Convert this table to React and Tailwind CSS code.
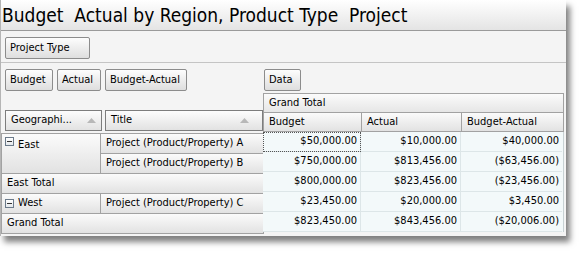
const font = { fontFamily: 'Tahoma, "DejaVu Sans Condensed", "DejaVu Sans", sans-serif' };

function Btn({ children, className = '' }) {
  return (
    <div
      className={`h-[22px] flex items-center px-[4px] border border-[#8c8c8c] rounded-[2px] bg-gradient-to-b from-[#fdfdfd] to-[#dedede] text-[11px] text-black ${className}`}
    >
      {children}
    </div>
  );
}

function SortArrow() {
  return (
    <svg width="9" height="5" viewBox="0 0 9 5" className="shrink-0">
      <path d="M0 5 L4.5 0 L9 5 Z" fill="#b8b8b8" />
    </svg>
  );
}

function Minus() {
  return (
    <span className="w-[9px] h-[9px] border border-[#6b7a8a] bg-gradient-to-b from-white to-[#e4e8ec] flex items-center justify-center mr-[4px] shrink-0">
      <span className="w-[5px] h-px bg-[#333]" />
    </span>
  );
}

function HeadCell({ children, className = '' }) {
  return (
    <div
      className={`flex items-center px-[5px] border-b border-r border-[#a2a2a2] bg-gradient-to-b from-[#fbfbfb] to-[#e2e2e2] text-[11px] text-black ${className}`}
    >
      {children}
    </div>
  );
}

const rows = [
  ['$50,000.00', '$10,000.00', '$40,000.00'],
  ['$750,000.00', '$813,456.00', '($63,456.00)'],
  ['$800,000.00', '$823,456.00', '($23,456.00)'],
  ['$23,450.00', '$20,000.00', '$3,450.00'],
  ['$823,450.00', '$843,456.00', '($20,006.00)'],
];

export default function App() {
  return (
    <div className="w-[584px] h-[255px] bg-white" style={font}>
      <div className="w-[566px] h-[236px] bg-[#f4f4f4] border-l border-[#b5b5b5] shadow-[4px_6px_6px_rgba(0,0,0,0.5)] flex flex-col">
        <div className="h-[31px] shrink-0 border-b border-[#9a9a9a] bg-gradient-to-b from-white to-[#e4e4e4] flex items-center pl-[1px] text-[19px] text-black leading-none">
          Budget&nbsp; Actual by Region, Product Type&nbsp; Project
        </div>

        <div className="h-[32px] shrink-0 border-b border-[#c4c4c4] pl-[4px] pt-[6px]">
          <Btn className="w-[85px]">Project Type</Btn>
        </div>

        <div className="flex flex-1">
          <div className="w-[262px] flex flex-col">
            <div className="flex gap-[4px] pl-[4px] pt-[6px] h-[47px]">
              <Btn className="w-[48px]">Budget</Btn>
              <Btn className="w-[44px]">Actual</Btn>
              <Btn className="w-[82px]">Budget-Actual</Btn>
            </div>
            <div className="flex gap-[3px] pl-[4px] h-[22px]">
              <div className="w-[97px] h-[21px] flex items-center justify-between px-[5px] border border-[#7d7d7d] bg-gradient-to-b from-[#fdfdfd] to-[#e2e2e2] text-[11px]">
                <span>Geographi...</span>
                <SortArrow />
              </div>
              <div className="w-[158px] h-[21px] flex items-center justify-between pl-[5px] pr-[13px] border border-[#7d7d7d] bg-gradient-to-b from-[#fdfdfd] to-[#e2e2e2] text-[11px]">
                <span>Title</span>
                <SortArrow />
              </div>
            </div>
            <div className="grid grid-cols-[99px_163px] grid-rows-[20px_20px_20px_20px_20px] border-t border-l border-[#a2a2a2] mt-[1px]">
              <HeadCell className="row-span-2 items-start pt-[3px] pl-[3px]">
                <Minus />
                East
              </HeadCell>
              <HeadCell>Project (Product/Property) A</HeadCell>
              <HeadCell>Project (Product/Property) B</HeadCell>
              <HeadCell className="col-span-2">East Total</HeadCell>
              <HeadCell className="pl-[3px]">
                <Minus />
                West
              </HeadCell>
              <HeadCell>Project (Product/Property) C</HeadCell>
              <HeadCell className="col-span-2">Grand Total</HeadCell>
            </div>
          </div>

          <div className="w-[301px] flex flex-col">
            <div className="pl-[1px] pt-[6px] h-[30px]">
              <Btn className="w-[37px]">Data</Btn>
            </div>
            <div className="h-[20px] flex items-center pl-[5px] border border-[#a2a2a2] bg-gradient-to-b from-[#fbfbfb] to-[#e6e6e6] text-[11px]">
              Grand Total
            </div>
            <div className="grid grid-cols-[98px_100px_101px] h-[19px] border-l border-r border-b border-[#a2a2a2]">
              {['Budget', 'Actual', 'Budget-Actual'].map((h, i) => (
                <div
                  key={h}
                  className={`flex items-center pl-[5px] bg-gradient-to-b from-[#fbfbfb] to-[#e2e2e2] text-[11px] ${i < 2 ? 'border-r border-[#a2a2a2]' : ''}`}
                >
                  {h}
                </div>
              ))}
            </div>
            <div className="grid grid-cols-[98px_100px_101px] border-r border-[#c8d2d4] bg-[#f3f9fa] text-[11px] text-black">
              {rows.map((r, ri) =>
                r.map((v, ci) => (
                  <div
                    key={ri + '-' + ci}
                    className={`h-[20px] flex items-center justify-end pr-[3px] border-b border-[#dde6e8] ${ci < 2 ? 'border-r border-r-[#dde6e8]' : ''} ${ri === 0 && ci === 0 ? 'outline outline-1 outline-dotted outline-[#555] -outline-offset-1' : ''}`}
                  >
                    {v}
                  </div>
                ))
              )}
            </div>
          </div>
        </div>
      </div>
    </div>
  );
}
